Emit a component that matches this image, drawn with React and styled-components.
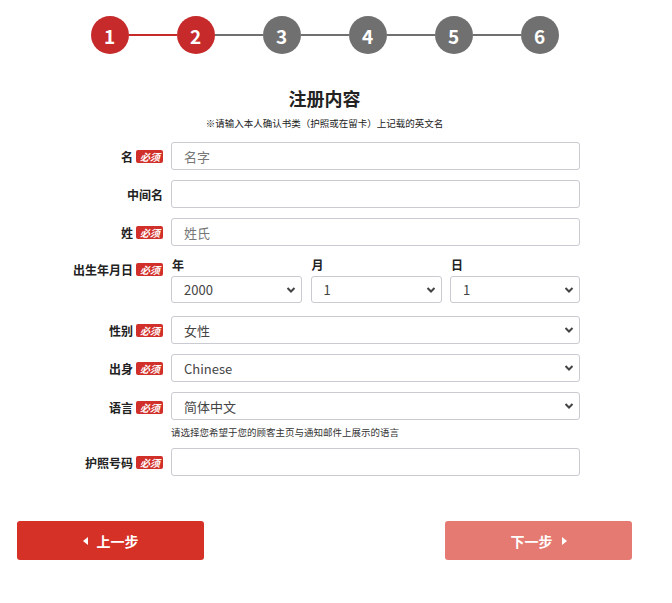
import React from "react";
import styled, { createGlobalStyle } from "styled-components";

const GlobalStyle = createGlobalStyle`
  body {
    margin: 0;
    background: #fff;
    font-family: "Noto Sans CJK SC", "Noto Sans", sans-serif;
    color: #222;
  }
`;

const Page = styled.div`
  width: 615px;
  margin-left: 17px;
  padding-top: 16px;
`;

const Steps = styled.div`
  display: flex;
  align-items: center;
  justify-content: center;
`;

const Circle = styled.div`
  width: 38px;
  height: 38px;
  border-radius: 50%;
  background: ${(p) => (p.$active ? "#c62a2b" : "#707070")};
  color: #fff;
  display: flex;
  align-items: center;
  justify-content: center;
  font-size: 19px;
  font-weight: 700;
  line-height: 1;
`;

const Line = styled.div`
  width: 48px;
  height: 2px;
  background: ${(p) => (p.$active ? "#c62a2b" : "#707070")};
`;

const Title = styled.h2`
  margin: 31px 0 0;
  text-align: center;
  font-size: 18px;
  font-weight: 700;
  line-height: 26px;
  color: #222;
`;

const Note = styled.p`
  margin: 5px 0 0;
  text-align: center;
  font-size: 9.5px;
  line-height: 14px;
  color: #222;
`;

const Form = styled.div`
  margin-top: 12px;
  display: flex;
  flex-direction: column;
`;

const Row = styled.div`
  display: grid;
  grid-template-columns: 146px 409px;
  column-gap: 8px;
  align-items: ${(p) => (p.$top ? "start" : "center")};
  margin-top: ${(p) => p.$mt || 0}px;
`;

const Label = styled.div`
  display: flex;
  justify-content: flex-end;
  align-items: center;
  gap: 3px;
  font-size: 12px;
  font-weight: 700;
  color: #222;
  padding-top: ${(p) => p.$pt || 0}px;
`;

const Badge = styled.span`
  display: inline-block;
  background: #d1302a;
  color: #fff;
  font-size: 10px;
  font-weight: 700;
  font-style: italic;
  line-height: 13px;
  padding: 0 3px 0 4px;
  border-radius: 2px;
`;

const Input = styled.input`
  box-sizing: border-box;
  width: 100%;
  height: 28px;
  border: 1px solid #c9cad2;
  border-radius: 3px;
  padding: 0 12px;
  font-family: inherit;
  font-size: 13px;
  color: #444;
  outline: none;
  &::placeholder {
    color: #777;
  }
`;

const SelectWrap = styled.div`
  position: relative;
  width: 100%;
`;

const Select = styled.select`
  box-sizing: border-box;
  width: 100%;
  height: ${(p) => p.$h || 28}px;
  border: 1px solid #c9cad2;
  border-radius: 3px;
  padding: 0 12px;
  font-family: inherit;
  font-size: 13px;
  color: #444;
  background: #fff;
  appearance: none;
  outline: none;
`;

const Chevron = styled.svg`
  position: absolute;
  right: 6px;
  top: 50%;
  margin-top: -4px;
  width: 10px;
  height: 8px;
  pointer-events: none;
`;

const DateGrid = styled.div`
  display: grid;
  grid-template-columns: 131px 131px 130px;
  justify-content: space-between;
  row-gap: 4px;
`;

const SubLabel = styled.div`
  font-size: 12px;
  font-weight: 700;
  line-height: 14px;
  padding-left: 1px;
  color: #222;
`;

const Help = styled.div`
  font-size: 9.5px;
  line-height: 14px;
  color: #333;
  margin-top: 5px;
`;

const Buttons = styled.div`
  display: flex;
  justify-content: space-between;
  margin-top: 45px;
`;

const Button = styled.button`
  width: 187px;
  height: 39px;
  border: none;
  border-radius: 3px;
  background: ${(p) => (p.$light ? "#e57a72" : "#d63127")};
  color: #fff;
  font-family: inherit;
  font-size: 14px;
  font-weight: 700;
  display: flex;
  align-items: center;
  justify-content: center;
  gap: 9px;
`;

const Caret = ({ dir }) => (
  <svg width="5" height="8" viewBox="0 0 5 8">
    <path d={dir === "left" ? "M5 0 L0 4 L5 8 Z" : "M0 0 L5 4 L0 8 Z"} fill="#fff" />
  </svg>
);

const Dropdown = ({ value, h }) => (
  <SelectWrap>
    <Select $h={h} defaultValue={value}>
      <option>{value}</option>
    </Select>
    <Chevron viewBox="0 0 10 8">
      <path d="M1.5 2 L5 5.5 L8.5 2" fill="none" stroke="#444" strokeWidth="2" />
    </Chevron>
  </SelectWrap>
);

const Required = () => <Badge>必须</Badge>;

export default function App() {
  const steps = [1, 2, 3, 4, 5, 6];
  return (
    <>
      <GlobalStyle />
      <Page>
        <Steps>
          {steps.map((n, i) => (
            <React.Fragment key={n}>
              {i > 0 && <Line $active={n <= 2} />}
              <Circle $active={n <= 2}>{n}</Circle>
            </React.Fragment>
          ))}
        </Steps>

        <Title>注册内容</Title>
        <Note>※请输入本人确认书类（护照或在留卡）上记载的英文名</Note>

        <Form>
          <Row>
            <Label>名<Required /></Label>
            <Input placeholder="名字" />
          </Row>
          <Row $mt={10}>
            <Label>中间名</Label>
            <Input />
          </Row>
          <Row $mt={10}>
            <Label>姓<Required /></Label>
            <Input placeholder="姓氏" />
          </Row>
          <Row $mt={12} $top>
            <Label $pt={3}>出生年月日<Required /></Label>
            <DateGrid>
              <SubLabel>年</SubLabel>
              <SubLabel>月</SubLabel>
              <SubLabel>日</SubLabel>
              <Dropdown value="2000" h={27} />
              <Dropdown value="1" h={27} />
              <Dropdown value="1" h={27} />
            </DateGrid>
          </Row>
          <Row $mt={13}>
            <Label>性别<Required /></Label>
            <Dropdown value="女性" />
          </Row>
          <Row $mt={10}>
            <Label>出身<Required /></Label>
            <Dropdown value="Chinese" />
          </Row>
          <Row $mt={10} $top>
            <Label $pt={7}>语言<Required /></Label>
            <div>
              <Dropdown value="简体中文" />
              <Help>请选择您希望于您的顾客主页与通知邮件上展示的语言</Help>
            </div>
          </Row>
          <Row $mt={9}>
            <Label>护照号码<Required /></Label>
            <Input />
          </Row>
        </Form>

        <Buttons>
          <Button>
            <Caret dir="left" />
            上一步
          </Button>
          <Button $light>
            下一步
            <Caret dir="right" />
          </Button>
        </Buttons>
      </Page>
    </>
  );
}
